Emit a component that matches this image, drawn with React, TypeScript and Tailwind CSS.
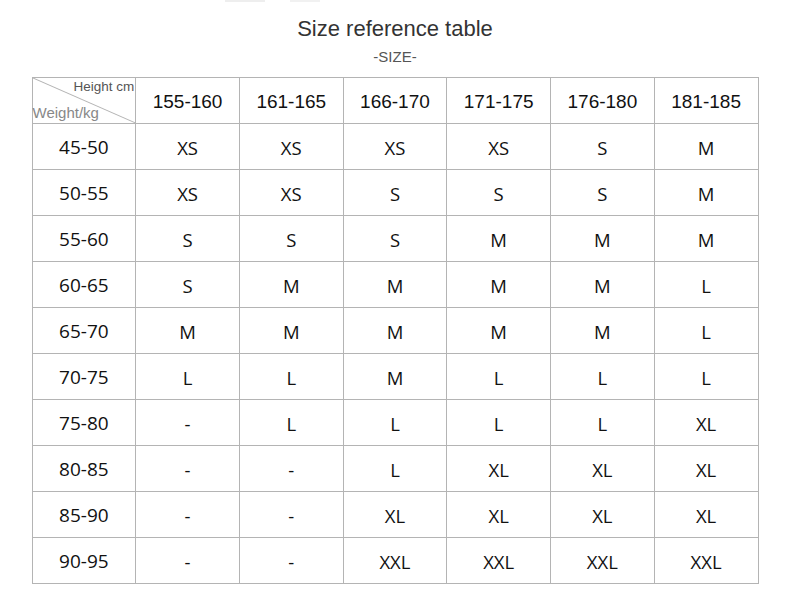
const heights = ['155-160', '161-165', '166-170', '171-175', '176-180', '181-185'];

const rows: [string, string[]][] = [
  ['45-50', ['XS', 'XS', 'XS', 'XS', 'S', 'M']],
  ['50-55', ['XS', 'XS', 'S', 'S', 'S', 'M']],
  ['55-60', ['S', 'S', 'S', 'M', 'M', 'M']],
  ['60-65', ['S', 'M', 'M', 'M', 'M', 'L']],
  ['65-70', ['M', 'M', 'M', 'M', 'M', 'L']],
  ['70-75', ['L', 'L', 'M', 'L', 'L', 'L']],
  ['75-80', ['-', 'L', 'L', 'L', 'L', 'XL']],
  ['80-85', ['-', '-', 'L', 'XL', 'XL', 'XL']],
  ['85-90', ['-', '-', 'XL', 'XL', 'XL', 'XL']],
  ['90-95', ['-', '-', 'XXL', 'XXL', 'XXL', 'XXL']],
];

const cell = 'border border-[#b4b4b4] h-[46px] p-0 text-center align-middle';

export default function App() {
  return (
    <div className="w-[790px] h-[612px] bg-white flex flex-col items-center overflow-hidden font-['Open_Sans','Noto_Sans',sans-serif]">
      {/* faint leftover marks at the top edge */}
      <div className="self-stretch flex gap-[25px] pl-[225px] h-[3px]">
        <div className="w-[40px] h-[2px] bg-[#eeeeee]" />
        <div className="w-[30px] h-[2px] bg-[#f1f1f1]" />
      </div>

      <h1 className="pt-[15px] text-[22px] leading-[22px] text-[#333] font-['Liberation_Sans',sans-serif]">
        Size reference table
      </h1>
      <p className="mt-[10px] text-[15px] leading-[14px] text-[#555] font-['Liberation_Sans',sans-serif]">
        -SIZE-
      </p>

      <table className="mt-[13px] w-[727px] table-fixed border-collapse">
        <thead>
          <tr>
            <th className={`${cell} relative font-normal`}>
              <svg className="absolute inset-0 w-full h-full" viewBox="0 0 100 46" preserveAspectRatio="none">
                <line x1="0" y1="0" x2="100" y2="46" stroke="#b4b4b4" strokeWidth="1" vectorEffect="non-scaling-stroke" />
              </svg>
              <span className="absolute right-[1px] top-[2px] text-[13.5px] leading-none text-[#555] font-['Liberation_Sans',sans-serif]">
                Height cm
              </span>
              <span className="absolute left-0 bottom-[3px] text-[15px] leading-none text-[#888] font-['Liberation_Sans',sans-serif]">
                Weight/kg
              </span>
            </th>
            {heights.map((h) => (
              <th
                key={h}
                className={`${cell} pt-[4px] font-normal text-[19px] text-[#111] font-['Liberation_Sans',sans-serif]`}
              >
                {h}
              </th>
            ))}
          </tr>
        </thead>
        <tbody>
          {rows.map(([w, sizes]) => (
            <tr key={w}>
              <td className={`${cell} pt-[2px] text-[19px] text-[#111]`}>{w}</td>
              {sizes.map((s, i) => (
                <td key={i} className={`${cell} pt-[2px] text-[18.5px] text-[#111]`}>
                  {s}
                </td>
              ))}
            </tr>
          ))}
        </tbody>
      </table>
    </div>
  );
}
